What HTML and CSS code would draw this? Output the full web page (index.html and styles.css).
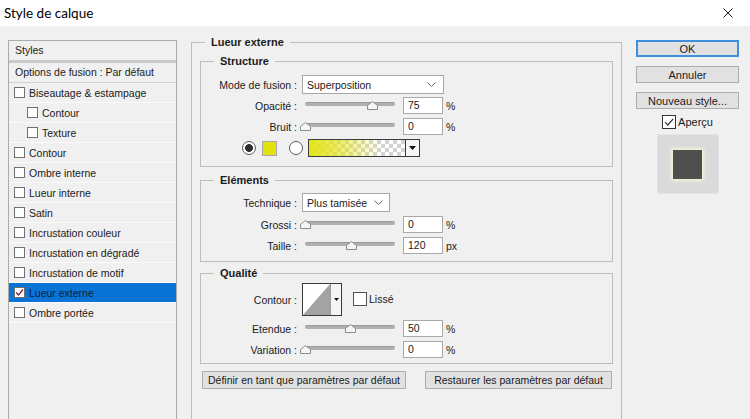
FILE: index.html
```html
<!DOCTYPE html>
<html lang="fr">
<head>
<meta charset="utf-8">
<title>Style de calque</title>
<link rel="stylesheet" href="styles.css">
</head>
<body>
<div class="titlebar">
  <span class="title">Style de calque</span>
  <svg class="close" width="10" height="10" viewBox="0 0 10 10"><path d="M0.5 0.5L9.5 9.5M9.5 0.5L0.5 9.5" stroke="#1a1a1a" stroke-width="1"/></svg>
</div>
<div class="main">
  <div class="styles-panel">
    <div class="sp-head">Styles</div>
    <div class="sp-opts">Options de fusion : Par défaut</div>
    <div class="sp-row"><span class="cb"></span>Biseautage &amp; estampage</div>
    <div class="sp-row sub-item"><span class="cb"></span>Contour</div>
    <div class="sp-row sub-item"><span class="cb"></span>Texture</div>
    <div class="sp-row"><span class="cb"></span>Contour</div>
    <div class="sp-row"><span class="cb"></span>Ombre interne</div>
    <div class="sp-row"><span class="cb"></span>Lueur interne</div>
    <div class="sp-row"><span class="cb"></span>Satin</div>
    <div class="sp-row"><span class="cb"></span>Incrustation couleur</div>
    <div class="sp-row"><span class="cb"></span>Incrustation en dégradé</div>
    <div class="sp-row"><span class="cb"></span>Incrustation de motif</div>
    <div class="sp-row selected"><span class="cb"><svg width="9" height="9" viewBox="0 0 9 9"><path d="M1 4.5L3.5 7L8 1.5" fill="none" stroke="#7a1f3a" stroke-width="1.2"/></svg></span>Lueur externe</div>
    <div class="sp-row"><span class="cb"></span>Ombre portée</div>
  </div>

  <fieldset class="group outer">
    <legend>Lueur externe</legend>

    <fieldset class="group sub structure">
      <legend>Structure</legend>
      <div class="row row-sel">
        <span class="lbl">Mode de fusion :</span>
        <div class="sel sel-wide"><span>Superposition</span><svg width="9" height="5" viewBox="0 0 9 5"><path d="M0.5 0.5L4.5 4.5L8.5 0.5" fill="none" stroke="#6a6a6a"/></svg></div>
      </div>
      <div class="row row-first">
        <span class="lbl">Opacité :</span>
        <div class="slider"><div class="track"></div><svg class="thumb" style="left:65px" width="11" height="9" viewBox="0 0 11 9"><path d="M0.5 8.5V4.5L5.5 0.5L10.5 4.5V8.5Z" fill="#f6f6f6" stroke="#8c8c8c"/></svg></div>
        <div class="num">75</div><span class="unit">%</span>
      </div>
      <div class="row">
        <span class="lbl">Bruit :</span>
        <div class="slider"><div class="track"></div><svg class="thumb" style="left:-2.5px" width="11" height="9" viewBox="0 0 11 9"><path d="M0.5 8.5V4.5L5.5 0.5L10.5 4.5V8.5Z" fill="#f6f6f6" stroke="#8c8c8c"/></svg></div>
        <div class="num">0</div><span class="unit">%</span>
      </div>
      <div class="row row-color">
        <span class="radio on"></span>
        <span class="swatch"></span>
        <span class="radio"></span>
        <div class="gradpick"><span class="grad"></span><span class="gdrop"><svg width="7" height="4" viewBox="0 0 7 4"><path d="M0 0H7L3.5 4Z" fill="#111"/></svg></span></div>
      </div>
    </fieldset>

    <fieldset class="group sub elements">
      <legend>Eléments</legend>
      <div class="row row-sel">
        <span class="lbl">Technique :</span>
        <div class="sel sel-narrow"><span>Plus tamisée</span><svg width="9" height="5" viewBox="0 0 9 5"><path d="M0.5 0.5L4.5 4.5L8.5 0.5" fill="none" stroke="#6a6a6a"/></svg></div>
      </div>
      <div class="row">
        <span class="lbl">Grossi :</span>
        <div class="slider"><div class="track"></div><svg class="thumb" style="left:-2.5px" width="11" height="9" viewBox="0 0 11 9"><path d="M0.5 8.5V4.5L5.5 0.5L10.5 4.5V8.5Z" fill="#f6f6f6" stroke="#8c8c8c"/></svg></div>
        <div class="num">0</div><span class="unit">%</span>
      </div>
      <div class="row">
        <span class="lbl">Taille :</span>
        <div class="slider"><div class="track"></div><svg class="thumb" style="left:43.5px" width="11" height="9" viewBox="0 0 11 9"><path d="M0.5 8.5V4.5L5.5 0.5L10.5 4.5V8.5Z" fill="#f6f6f6" stroke="#8c8c8c"/></svg></div>
        <div class="num">120</div><span class="unit">px</span>
      </div>
    </fieldset>

    <fieldset class="group sub qualite">
      <legend>Qualité</legend>
      <div class="row row-contour">
        <span class="lbl">Contour :</span>
        <div class="contour">
          <svg class="curve" width="27" height="31" viewBox="0 0 27 31"><rect width="27" height="31" fill="#fff"/><path d="M0 31L27 0V31Z" fill="#a3a3a3"/></svg>
          <span class="cdrop"><svg width="5" height="3" viewBox="0 0 5 3"><path d="M0 0H5L2.5 3Z" fill="#111"/></svg></span>
        </div>
        <span class="lisse"><span class="cbx"></span>Lissé</span>
      </div>
      <div class="row">
        <span class="lbl">Etendue :</span>
        <div class="slider"><div class="track"></div><svg class="thumb" style="left:42.5px" width="11" height="9" viewBox="0 0 11 9"><path d="M0.5 8.5V4.5L5.5 0.5L10.5 4.5V8.5Z" fill="#f6f6f6" stroke="#8c8c8c"/></svg></div>
        <div class="num">50</div><span class="unit">%</span>
      </div>
      <div class="row">
        <span class="lbl">Variation :</span>
        <div class="slider"><div class="track"></div><svg class="thumb" style="left:-2.5px" width="11" height="9" viewBox="0 0 11 9"><path d="M0.5 8.5V4.5L5.5 0.5L10.5 4.5V8.5Z" fill="#f6f6f6" stroke="#8c8c8c"/></svg></div>
        <div class="num">0</div><span class="unit">%</span>
      </div>
    </fieldset>

    <div class="btnrow">
      <div class="btn btn-def">Définir en tant que paramètres par défaut</div>
      <div class="btn btn-rest">Restaurer les paramètres par défaut</div>
    </div>
  </fieldset>

  <div class="side">
    <div class="btn sbtn ok">OK</div>
    <div class="btn sbtn">Annuler</div>
    <div class="btn sbtn">Nouveau style...</div>
    <div class="apercu"><span class="cbx checked"><svg width="12" height="12" viewBox="0 0 12 12"><path d="M2 6.2L4.8 9L10.2 2.8" fill="none" stroke="#333" stroke-width="1.2"/></svg></span>Aperçu</div>
    <div class="preview"><div class="pv-square"></div></div>
  </div>
</div>
</body>
</html>
```

FILE: styles.css
```css
html, body {
  margin: 0;
  padding: 0;
}
body {
  width: 750px;
  height: 419px;
  overflow: hidden;
  background: #f0f0f0;
  font-family: "Liberation Sans", Arial, sans-serif;
  font-size: 10.5px;
  color: #1b1b1b;
}

/* title bar */
.titlebar {
  height: 26px;
  background: #ffffff;
  display: flex;
  align-items: center;
  justify-content: space-between;
  padding: 0 17px 0 4px;
}
.title {
  font-family: Lato, "Liberation Sans", sans-serif;
  font-size: 13.5px;
  color: #000;
}
.close {
  display: block;
}

.main {
  display: flex;
  align-items: flex-start;
  padding-top: 10px;
}

/* styles list */
.styles-panel {
  margin: 4px 0 0 8px;
  width: 169px;
  height: 400px;
  box-sizing: border-box;
  border: 1px solid #ababab;
  background: #f0f0f0;
  flex: none;
}
.sp-head {
  height: 19px;
  line-height: 19px;
  padding-left: 6px;
  border-bottom: 3px solid #c9c9c9;
}
.sp-opts {
  height: 19px;
  line-height: 19px;
  padding-left: 6px;
  border-bottom: 1px solid #d2d2d2;
}
.sp-row {
  height: 19px;
  display: flex;
  align-items: center;
  padding-left: 5px;
  border-bottom: 1px solid #fbfbfb;
  white-space: nowrap;
}
.sp-row.sub-item {
  padding-left: 18px;
}
.sp-row.selected {
  background: #0a74d6;
  color: #0d1c3a;
}
.cb {
  width: 11px;
  height: 11px;
  box-sizing: border-box;
  border: 1px solid #707070;
  background: #fdfdfd;
  margin-right: 4px;
  display: flex;
  align-items: center;
  justify-content: center;
  flex: none;
}

/* group boxes */
.group {
  margin: 0;
  padding: 0;
  min-width: 0;
  border: 1px solid #bdbdbd;
  box-sizing: border-box;
}
.group > legend {
  font-weight: bold;
  font-size: 11px;
  line-height: 12px;
  padding: 0 6px;
  color: #1b1b1b;
}
.outer {
  margin-left: 14px;
  width: 431px;
  height: 420px;
  padding: 0 8px;
  flex: none;
}
.outer > legend {
  margin-left: 5px;
}
.sub {
  width: 413px;
  padding: 0;
}
.sub > legend {
  margin-left: 13px;
}
.structure {
  margin-top: 7px;
  padding: 8px 0 9px;
}
.elements {
  margin-top: 7px;
  padding: 7px 0 7px;
}
.qualite {
  margin-top: 5px;
  padding: 4px 0 5px;
}

/* rows */
.row {
  display: flex;
  align-items: center;
  height: 17px;
  margin-top: 4px;
}
.row-sel {
  height: 19px;
  margin-top: 0;
}
.row-first {
  margin-top: 3px;
}
.row-color {
  height: 18px;
  padding-left: 41px;
}
.row-contour {
  height: 33px;
  margin-top: 0;
}
.lbl {
  width: 96px;
  margin-right: 5px;
  text-align: right;
  white-space: nowrap;
  flex: none;
}

.sel {
  height: 19px;
  box-sizing: border-box;
  border: 1px solid #a7a7a7;
  background: #ffffff;
  display: flex;
  align-items: center;
  justify-content: space-between;
  padding: 0 7px 0 4px;
}
.sel-wide {
  width: 142px;
}
.sel-narrow {
  width: 88px;
  padding-right: 6px;
}

.slider {
  position: relative;
  width: 96px;
  height: 17px;
  flex: none;
}
.track {
  margin: 5px 3px 0;
  height: 3px;
  border-radius: 2px;
  background: #b0b0b0;
  border-top: 1px solid #9a9a9a;
}
.thumb {
  position: absolute;
  top: 4px;
  display: block;
}
.num {
  width: 40px;
  height: 17px;
  box-sizing: border-box;
  border: 1px solid #a9a9a9;
  background: #ffffff;
  padding-left: 4px;
  line-height: 15px;
  margin-left: 5px;
}
.unit {
  margin-left: 3px;
}

/* colour row */
.radio {
  width: 14px;
  height: 14px;
  box-sizing: border-box;
  border-radius: 50%;
  border: 1px solid #5a5a5a;
  background: #ffffff;
  flex: none;
}
.radio.on {
  background: radial-gradient(circle, #2e2e2e 0 3.6px, #ffffff 4.2px);
}
.swatch {
  width: 15px;
  height: 15px;
  box-sizing: border-box;
  border: 1px solid #a9a9a9;
  background: #e2e20e;
  margin: 0 12px 0 6px;
}
.gradpick {
  display: flex;
  height: 18px;
  margin-left: 5px;
  border: 1px solid #3c3c3c;
  box-sizing: border-box;
}
.grad {
  width: 96px;
  background:
    linear-gradient(to right, #e4e41a 0%, rgba(228, 228, 26, 0.75) 25%, rgba(228, 228, 26, 0) 75%),
    repeating-conic-gradient(#d4d4d4 0 25%, #ffffff 0 50%) 0 0 / 8px 8px;
}
.gdrop {
  width: 13px;
  border-left: 1px solid #3c3c3c;
  background: #f6f6f6;
  display: flex;
  align-items: center;
  justify-content: center;
}

/* contour */
.contour {
  display: flex;
  height: 33px;
  box-sizing: border-box;
  border: 1px solid #3a3a3a;
  background: #fff;
}
.curve {
  display: block;
}
.cdrop {
  width: 10px;
  border-left: 1px solid #9a9a9a;
  background: #f4f4f4;
  display: flex;
  align-items: center;
  justify-content: center;
}
.lisse {
  display: flex;
  align-items: center;
  margin-left: 11px;
  margin-top: -2px;
}
.cbx {
  width: 14px;
  height: 14px;
  box-sizing: border-box;
  border: 1px solid #555;
  background: #ffffff;
  margin-right: 2px;
  display: flex;
  align-items: center;
  justify-content: center;
  flex: none;
}

/* bottom buttons */
.btnrow {
  display: flex;
  justify-content: space-between;
  margin-top: 7px;
  padding: 0 1px 0 2px;
}
.btn {
  height: 18px;
  box-sizing: border-box;
  border: 1px solid #adadad;
  background: #e1e1e1;
  display: flex;
  align-items: center;
  justify-content: center;
  white-space: nowrap;
}
.btn-def {
  width: 204px;
}
.btn-rest {
  width: 187px;
}

/* right column */
.side {
  margin: 4px 0 0 14px;
  width: 103px;
  display: flex;
  flex-direction: column;
  align-items: center;
  flex: none;
}
.sbtn {
  width: 103px;
  height: 17px;
  margin-bottom: 9px;
  font-size: 11px;
}
.sbtn.ok {
  border: 2px solid #3f8fdc;
}
.apercu {
  display: flex;
  align-items: center;
  margin-top: -3px;
  font-size: 11px;
}
.apercu .cbx {
  border-color: #333;
}
.preview {
  margin-top: 5px;
  width: 62px;
  height: 60px;
  box-sizing: border-box;
  background: #dadada;
  border: 1px solid #e4e4e4;
  display: flex;
  align-items: center;
  justify-content: center;
}
.pv-square {
  width: 29px;
  height: 29px;
  background: #4f4f4f;
  box-shadow: 0 0 3px 2px #f3f3d6;
}
```
